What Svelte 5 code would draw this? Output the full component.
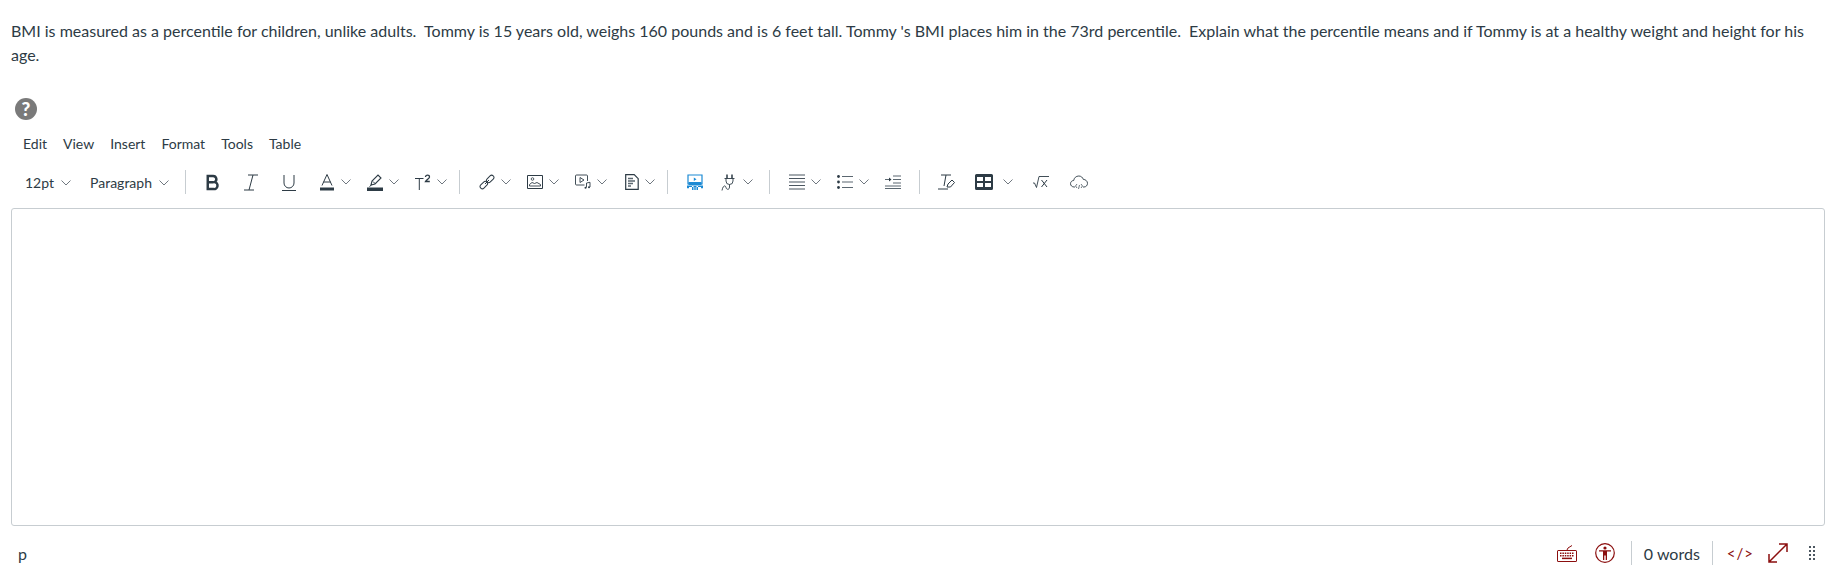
<script>
	const menus = ["Edit", "View", "Insert", "Format", "Tools", "Table"];
</script>

{#snippet chev()}
	<svg class="chev" viewBox="0 0 10 6" width="10" height="6"><path d="M.5.5 5 5 9.5.5" fill="none" stroke="#4b5660" stroke-width=".8" /></svg>
{/snippet}

<main>
	<p class="question">
		BMI is measured as a percentile for children, unlike adults.&nbsp; Tommy is 15 years old, weighs 160 pounds and is 6 feet tall. Tommy 's BMI places him in the 73rd percentile.&nbsp; Explain what the percentile means and if Tommy is at a healthy weight and height for his age.
	</p>

	<div class="help">?</div>

	<nav class="menubar">
		{#each menus as m}
			<span>{m}</span>
		{/each}
	</nav>

	<div class="toolbar">
		<div class="group first">
			<span class="select">12pt {@render chev()}</span>
			<span class="select para">Paragraph {@render chev()}</span>
		</div>
		<i class="sep"></i>
		<div class="group">
			<span class="tool"><svg viewBox="0 0 16 18" width="14" height="17"><path d="M2 1.5h6a3.700 3.700 0 0 1 1.800 7A4 4 0 0 1 8.500 16.500H2zM2 8.700h6.500" fill="none" stroke="#2d3b45" stroke-width="2.800" /></svg></span>
			<span class="tool"><svg viewBox="0 0 14 17" width="14" height="17"><path d="M4 1h10M0 16h10M9 1 5 16" fill="none" stroke="#2d3b45" stroke-width="1" /></svg></span>
			<span class="tool"><svg viewBox="0 0 14 17" width="14" height="17"><path d="M2 1v8a5 5 0 0 0 10 0V1M0 16.500h14" fill="none" stroke="#2d3b45" stroke-width="1" /></svg></span>
			<span class="tool split"><svg viewBox="0 0 16 17" width="16" height="17"><path d="M3 11.500 8 .5l5 11M4.500 8h7" fill="none" stroke="#2d3b45" /><path d="M1 13.500h14V16.500H1z" fill="#2d3b45" /></svg>{@render chev()}</span>
			<span class="tool split"><svg viewBox="0 0 16 17" width="16" height="17"><path d="M4 11 5 7 11 1l3 3-6 6z" fill="none" stroke="#2d3b45" stroke-width="1.100" /><path d="M6 7.500 8.500 10M2.500 12.500l2-1.500" fill="none" stroke="#2d3b45" /><path d="M0 13.500h16V17H0z" fill="#2d3b45" /></svg>{@render chev()}</span>
			<span class="tool split"><svg viewBox="0 0 16 17" width="16" height="17"><path d="M0 4.500h8.500M4.300 4.500V16" fill="none" stroke="#2d3b45" /><path d="M10.500 3a2 1.800 0 0 1 4 0c0 1.500-2.800 2.500-4 4.500h4.300" fill="none" stroke="#2d3b45" stroke-width="1.300" /></svg>{@render chev()}</span>
		</div>
		<i class="sep wide"></i>
		<div class="group">
			<span class="tool split"><svg viewBox="0 0 16 16" width="16" height="16"><g fill="none" stroke="#2d3b45" stroke-width="1"><rect x="7" y="2.700" width="8.500" height="4.500" rx="2.200" transform="rotate(-45 11.200 5)" /><rect x=".5" y="8.800" width="8.500" height="4.500" rx="2.200" transform="rotate(-45 4.800 11)" /></g><path d="M6 10 10 6" stroke="#2d3b45" /></svg>{@render chev()}</span>
			<span class="tool split"><svg viewBox="0 0 16 14" width="16" height="14"><path d="M.5.500h15v13H.5z" fill="none" stroke="#2d3b45" /><circle cx="5.500" cy="4" r="1.300" fill="none" stroke="#2d3b45" stroke-width=".8" /><path d="M2.500 11h11V9.500L10 7.500 7.500 8.500 5 7.500l-2.500 2z" fill="none" stroke="#2d3b45" stroke-width=".9" /></svg>{@render chev()}</span>
			<span class="tool split"><svg viewBox="0 0 16 16" width="16" height="16"><path d="M9.500 11H1.500a1 1 0 0 1-1-1V2a1 1 0 0 1 1-1h10a1 1 0 0 1 1 1v5" fill="none" stroke="#2d3b45" stroke-width=".9" /><path d="M5 3.500 9 6 5 8.500z" fill="none" stroke="#2d3b45" stroke-width=".9" /><path d="M11.500 13.500V9l3.500-.7V13" fill="none" stroke="#2d3b45" stroke-width=".9" /><circle cx="10.500" cy="13.700" r="1" fill="#2d3b45" /><circle cx="14" cy="13.200" r="1" fill="#2d3b45" /></svg>{@render chev()}</span>
			<span class="tool split doc"><svg viewBox="0 0 14 16" width="14" height="16"><path d="M.7.700h8.500l4 4v10.600H.7z" fill="none" stroke="#2d3b45" stroke-width="1.200" /><path d="M3 4.500h5M3 7h7M3 9.500h5M3 12h3" stroke="#5b6770" stroke-width="1.300" /></svg>{@render chev()}</span>
		</div>
		<i class="sep"></i>
		<div class="group">
			<span class="tool"><svg viewBox="0 0 16 17" width="16" height="17"><path d="M1 1h14v9H1z" fill="none" stroke="#1c8ad4" stroke-width="1.200" /><path d="M6.800 3.500 9.500 5.200 6.800 7z" fill="#1c8ad4" /><path d="M1.500 8h13v3h-13zM0 11.500h16V13H0zM5 11v5h1.500v-5zM9.500 11v5H11v-5zM7.300 13h1.400v3H7.300zM0 13h2v1.300H0zM14 13h2v1.300h-2z" fill="#1c8ad4" /></svg></span>
			<span class="tool split tight"><svg viewBox="0 0 16 17" width="16" height="17"><path d="M6 .500v4M11 .500v4" fill="none" stroke="#2d3b45" stroke-width="1.500" /><path d="M3.500 4.500h10M5 4.500v2.500a3.500 3.500 0 0 0 7 0V4.500M8.500 10.500v2.500c0 3-3 3-3.500 .5S2 11 1 16.500" fill="none" stroke="#2d3b45" stroke-width=".9" /></svg>{@render chev()}</span>
		</div>
		<i class="sep wide"></i>
		<div class="group">
			<span class="tool split"><svg viewBox="0 0 16 16" width="16" height="16"><path d="M0 1h16M0 4.500h16M0 8h16M0 11.500h16M0 15h16" stroke="#4b5660" stroke-width="1.100" /></svg>{@render chev()}</span>
			<span class="tool split"><svg viewBox="0 0 16 14" width="16" height="14"><path d="M5 1.500h11M5 7h11M5 12.500h11" stroke="#5b6770" stroke-width="1.100" /><circle cx="1.500" cy="1.500" r="1.400" fill="#2d3b45" /><circle cx="1.500" cy="7" r="1.400" fill="#2d3b45" /><circle cx="1.500" cy="12.500" r="1.400" fill="#2d3b45" /></svg>{@render chev()}</span>
			<span class="tool ind"><svg viewBox="0 0 16 14" width="16" height="14"><path d="M8 1h8M8 4.500h8M8 8h8M0 11h16M0 13.500h16M0 4.500h5" stroke="#5b6770" stroke-width="1.100" /><path d="M4 2.500 6.500 4.500 4 6.500z" fill="#2d3b45" /></svg></span>
		</div>
		<i class="sep wide"></i>
		<div class="group">
			<span class="tool"><svg viewBox="0 0 17 16" width="17" height="16"><path d="M3 1h10M8 1 6 12M0 15h10" fill="none" stroke="#2d3b45" stroke-width="1" /><path d="M9 13l1-3 4-4 2.500 2.500-4 4.500z" fill="none" stroke="#2d3b45" stroke-width="1" /></svg></span>
			<span class="tool split table"><svg viewBox="0 0 18 16" width="18" height="16"><path fill-rule="evenodd" d="M1.500 0h15A1.500 1.500 0 0 1 18 1.500v13a1.500 1.500 0 0 1-1.500 1.500h-15A1.500 1.500 0 0 1 0 14.500v-13A1.500 1.500 0 0 1 1.500 0zM2 3v4h6V3zM10 3v4h6V3zM2 9v4h6V9zM10 9v4h6V9z" fill="#2d3b45" /></svg>{@render chev()}</span>
			<span class="tool"><svg viewBox="0 0 16 12" width="16" height="12"><path d="M0 7h1.500L3.500 11.500 6 .5h10" fill="none" stroke="#2d3b45" stroke-width=".9" /><path d="M8.500 4 14 11M14 4 8.500 11" stroke="#2d3b45" stroke-width="1" /></svg></span>
			<span class="tool"><svg viewBox="0 0 18 15" width="18" height="15"><path d="M5 12H4.200C2 12 .5 10.500.5 8.700S2 5.500 3.700 5.500C4 3 6 1 8.800 1c2.200 0 4 1.500 4.500 3.400 2.300 0 4.200 1.800 4.200 3.900S16 12 14 12h-1" fill="none" stroke="#2d3b45" stroke-width=".9" /><path d="M7 9 5.500 11 7 13M11 9l1.500 2L11 13M9.500 10l-1 4" fill="none" stroke="#2d3b45" stroke-width=".7" /></svg></span>
		</div>
	</div>

	<div class="editor"></div>

	<footer>
		<span class="path">p</span>
		<div class="status">
			<svg class="kbd" viewBox="0 0 20 17" width="20" height="17"><path fill-rule="evenodd" d="M1.500 5h17A1.500 1.500 0 0 1 20 6.500v9a1.500 1.500 0 0 1-1.500 1.500h-17A1.500 1.500 0 0 1 0 15.500v-9A1.500 1.500 0 0 1 1.500 5zM1 6v10h18V6z" fill="#8b0e0e" /><path d="M3 8.200h14M3 10.700h14" stroke="#8b0e0e" stroke-width="1.500" stroke-dasharray="1.500 .9" /><path d="M5 13.400h10" stroke="#8b0e0e" stroke-width="1.500" /><path d="M10 5 11 3 15 .5" fill="none" stroke="#8b0e0e" /></svg>
			<svg class="a11y" viewBox="0 0 20 20" width="20" height="20"><circle cx="10" cy="10" r="9.300" fill="none" stroke="#8b0e0e" stroke-width="1.200" /><circle cx="10" cy="5" r="1.600" fill="#8b0e0e" /><path d="M4 7.200h12v1.200h-4v8.600h-1.300v-4.500h-1.400v4.500H8V8.400H4z" fill="#8b0e0e" /></svg>
			<i class="divider"></i>
			<span class="words">0 words</span>
			<i class="divider"></i>
			<span class="html">&lt;/&gt;</span>
			<svg class="expand" viewBox="0 0 20 20" width="20" height="20"><path d="M1 19 19 1M11 1h8v8M1 11v8h8" fill="none" stroke="#8b0e0e" stroke-width="1.500" /></svg>
			<svg class="dots" viewBox="0 0 6 16" width="6" height="16">
				{#each [1, 5, 9, 13] as y}
					<rect x="0" {y} width="2" height="2" fill="#4b5660" />
					<rect x="4" {y} width="2" height="2" fill="#4b5660" />
				{/each}
			</svg>
		</div>
	</footer>
</main>

<style>
	:global(body) {
		background: #fff;
	}

	main {
		height: 581px;
		padding: 19px 8px 0 11px;
		box-sizing: border-box;
		font-family: Lato, sans-serif;
		color: #2d3b45;
		overflow: hidden;
	}

	.question {
		margin: 0;
		font-size: 16px;
		line-height: 24px;
	}

	.help {
		width: 22px;
		height: 22px;
		margin: 31px 0 0 4px;
		border-radius: 50%;
		background: #7a7a7a;
		color: #fff;
		font-size: 19px;
		font-weight: 900;
		line-height: 22px;
		text-align: center;
	}

	.menubar {
		display: flex;
		gap: 16px;
		margin: 14px 0 0 12px;
		font-size: 14px;
		line-height: 20px;
	}

	.toolbar {
		display: flex;
		align-items: center;
		height: 24px;
		margin-top: 16px;
	}

	.group {
		display: flex;
		align-items: center;
	}

	.first {
		padding-left: 14px;
		gap: 19px;
		font-size: 14px;
	}

	.select {
		display: flex;
		align-items: center;
		gap: 7px;
	}

	.select .chev {
		margin-top: 2px;
	}

	.sep {
		width: 1px;
		height: 24px;
		margin: 0 8px;
		background: #c7cdd1;
	}

	.first + .sep {
		margin-left: 16px;
	}

	.sep.wide {
		margin-left: 7px;
	}

	.tool {
		display: flex;
		align-items: center;
		justify-content: center;
		width: 38px;
		height: 24px;
	}

	.tool.split {
		justify-content: flex-start;
		gap: 6px;
		width: 48px;
		padding-left: 11px;
		box-sizing: border-box;
	}

	.tool.tight {
		padding-left: 7px;
	}

	.tool.doc {
		width: 47px;
		padding-left: 13px;
	}

	.tool.table {
		width: 56px;
		padding-left: 9px;
		gap: 10px;
	}

	.editor {
		height: 318px;
		margin-top: 14px;
		border: 1px solid #c7cdd1;
		border-radius: 3px;
		box-sizing: border-box;
	}

	footer {
		display: flex;
		justify-content: space-between;
		align-items: center;
		height: 32px;
		margin-top: 11px;
	}

	.path {
		margin-left: 7px;
		font-size: 16px;
	}

	.status {
		display: flex;
		align-items: center;
	}

	.kbd {
		margin-right: 18px;
	}

	.divider {
		width: 1px;
		height: 24px;
		margin-left: 16px;
		background: #c7cdd1;
	}

	.words {
		margin-left: 12px;
		margin-right: -4px;
		font-size: 16px;
	}

	.html {
		margin-left: 14px;
		color: #8b0e0e;
		font-size: 15px;
		letter-spacing: 1px;
	}

	.expand {
		margin-left: 14px;
	}

	.dots {
		margin-left: 21px;
		margin-right: 10px;
	}
</style>
